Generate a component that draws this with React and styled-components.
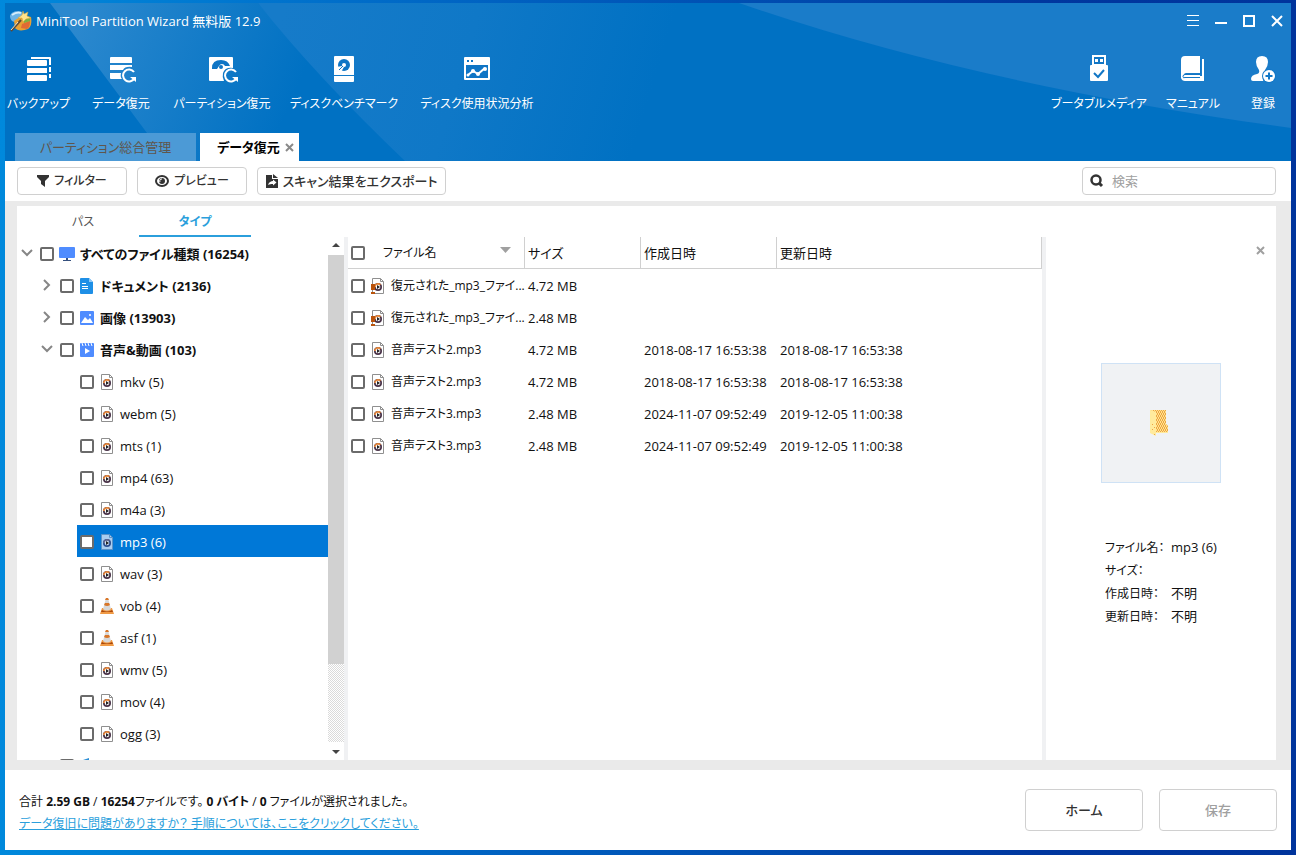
import { useState } from "react";
import styled, { createGlobalStyle } from "styled-components";

const tools = [
    { name: "バックアップ", icon: "backup", width: 57 },
    { name: "データ復元", icon: "recovery", width: 58 },
    { name: "パーティション復元", icon: "partition", width: 94 },
    { name: "ディスクベンチマーク", icon: "benchmark", width: 100 },
    { name: "ディスク使用状況分析", icon: "usage", width: 116 },
];

const sideTools = [
    { name: "ブータブルメディア", icon: "usb", width: 88 },
    { name: "マニュアル", icon: "manual", width: 50 },
    { name: "登録", icon: "register", width: 40 },
];

const tree = [
    { name: "すべてのファイル種類 (16254)", level: 0, icon: "monitor", open: true },
    { name: "ドキュメント (2136)", level: 1, icon: "document", open: false },
    { name: "画像 (13903)", level: 1, icon: "image", open: false },
    { name: "音声&動画 (103)", level: 1, icon: "video", open: true },
    { name: "mkv (5)", level: 2, icon: "media" },
    { name: "webm (5)", level: 2, icon: "media" },
    { name: "mts (1)", level: 2, icon: "media" },
    { name: "mp4 (63)", level: 2, icon: "media" },
    { name: "m4a (3)", level: 2, icon: "media" },
    { name: "mp3 (6)", level: 2, icon: "media" },
    { name: "wav (3)", level: 2, icon: "media" },
    { name: "vob (4)", level: 2, icon: "cone" },
    { name: "asf (1)", level: 2, icon: "cone" },
    { name: "wmv (5)", level: 2, icon: "media" },
    { name: "mov (4)", level: 2, icon: "media" },
    { name: "ogg (3)", level: 2, icon: "media" },
    { name: "", level: 1, icon: "clapper" },
];

const files = [
    { id: 1, name: "復元された_mp3_ファイ...", size: "4.72 MB", created: "", updated: "", icon: "mediaLost" },
    { id: 2, name: "復元された_mp3_ファイ...", size: "2.48 MB", created: "", updated: "", icon: "mediaLost" },
    { id: 3, name: "音声テスト2.mp3", size: "4.72 MB", created: "2018-08-17 16:53:38", updated: "2018-08-17 16:53:38", icon: "media" },
    { id: 4, name: "音声テスト2.mp3", size: "4.72 MB", created: "2018-08-17 16:53:38", updated: "2018-08-17 16:53:38", icon: "media" },
    { id: 5, name: "音声テスト3.mp3", size: "2.48 MB", created: "2024-11-07 09:52:49", updated: "2019-12-05 11:00:38", icon: "media" },
    { id: 6, name: "音声テスト3.mp3", size: "2.48 MB", created: "2024-11-07 09:52:49", updated: "2019-12-05 11:00:38", icon: "media" },
];

export default function App() {

    const [selected, setSelected] = useState("mp3 (6)");
    const [search, setSearch] = useState("");

    return (
        <>
            <GlobalStyle />
            <Window>
                <Header>
                    <Facets />
                    <TitleBar>
                        <Logo />
                        <h1>MiniTool Partition Wizard 無料版 12.9</h1>
                        <WindowButtons>
                            <button aria-label="メニュー"><svg width="14" height="14"><path d="M1 1.5h12M1 6.5h12M1 11.5h12" stroke="#fff" /></svg></button>
                            <button aria-label="最小化"><svg width="14" height="14"><path d="M1 9h12" stroke="#fff" strokeWidth="2" /></svg></button>
                            <button aria-label="最大化"><svg width="14" height="14"><path d="M2 2h10v10H2z" fill="none" stroke="#fff" strokeWidth="2" /></svg></button>
                            <button aria-label="閉じる"><svg width="14" height="14"><path d="M2 2l10 10M12 2L2 12" stroke="#fff" strokeWidth="2" /></svg></button>
                        </WindowButtons>
                    </TitleBar>
                    <ToolBar>
                        <ToolGroup>
                            {tools.map((tool) => <Tool key={tool.name} $width={tool.width}><Icon name={tool.icon} /><span>{tool.name}</span></Tool>)}
                        </ToolGroup>
                        <ToolGroup>
                            {sideTools.map((tool) => <Tool key={tool.name} $width={tool.width}><Icon name={tool.icon} /><span>{tool.name}</span></Tool>)}
                        </ToolGroup>
                    </ToolBar>
                    <Tabs>
                        <Tab $width="181px">パーティション総合管理</Tab>
                        <Tab $width="99px" $active>データ復元 <Cross color="#8a8a8a" /></Tab>
                    </Tabs>
                </Header>

                <Actions>
                    <Action $width="110px" $size="12px">
                        <svg width="12" height="12"><path d="M0 0h12v2L8 6v6L4 9V6L0 2z" fill="#333" /></svg>
                        フィルター
                    </Action>
                    <Action $width="110px" $size="12px">
                        <svg width="14" height="12" viewBox="0 0 14 12">
                            <ellipse cx="7" cy="6" rx="6" ry="5" fill="none" stroke="#333" strokeWidth="2" />
                            <circle cx="7" cy="6" r="3" fill="#333" />
                            <path d="M7 4a2 2 0 0 0-2 3" fill="none" stroke="#fff" />
                        </svg>
                        プレビュー
                    </Action>
                    <Action $width="189px" $size="13px">
                        <svg width="12" height="14" viewBox="0 0 12 14">
                            <path d="M0 1h6v4h6v9H0z" fill="#333" />
                            <path d="M7 0l5 4H7z" fill="#333" />
                            <path d="M2 11c1-3 3-4 5-4V5.500L10.500 8.500 7 11.500V10c-2 0-3.500 0-5 1z" fill="#fff" />
                        </svg>
                        スキャン結果をエクスポート
                    </Action>
                    <Search>
                        <svg width="14" height="14"><circle cx="6" cy="6" r="4.500" fill="none" stroke="#333" strokeWidth="2.500" /><path d="M9 9l3 3" stroke="#333" strokeWidth="3" /></svg>
                        <input aria-label="検索" placeholder="検索" value={search} onChange={(e) => setSearch(e.target.value)} />
                    </Search>
                </Actions>

                <Content>
                    <Panel>
                        <Sidebar>
                            <Views>
                                <View>パス</View>
                                <View $active>タイプ</View>
                            </Views>
                            <TreeArea>
                                <Tree>
                                    {tree.map((item) => (
                                        <Node key={item.name} $level={item.level}>
                                            <Toggle>{item.open !== undefined && <Chevron open={item.open} />}</Toggle>
                                            <NodeLabel $bold={item.level < 2} $selected={item.name === selected} onClick={() => setSelected(item.name)}>
                                                <Check type="checkbox" aria-label={item.name} />
                                                <IconBox><Icon name={item.icon} tint={item.name === selected} /></IconBox>
                                                <span>{item.name}</span>
                                            </NodeLabel>
                                        </Node>
                                    ))}
                                </Tree>
                                <Scrollbar>
                                    <svg width="16" height="18"><path d="M4 10l4-4 4 4z" fill="#444" /></svg>
                                    <Track><Thumb /></Track>
                                    <svg width="16" height="18"><path d="M4 8l4 4 4-4z" fill="#444" /></svg>
                                </Scrollbar>
                            </TreeArea>
                        </Sidebar>
                        <Splitter />
                        <TableArea>
                            <Table>
                                <colgroup><NameCol /><SizeCol /><DateCol /><col /></colgroup>
                                <thead>
                                    <tr>
                                        <th>
                                            <HeadName>
                                                <Check type="checkbox" aria-label="すべて選択" />
                                                <span>ファイル名</span>
                                                <svg width="11" height="12"><path d="M0 0h11L5.500 6z" fill="#a0a0a0" /></svg>
                                            </HeadName>
                                        </th>
                                        <th>サイズ</th>
                                        <th>作成日時</th>
                                        <th>更新日時</th>
                                    </tr>
                                </thead>
                                <tbody>
                                    {files.map((file) => (
                                        <tr key={file.id}>
                                            <td>
                                                <FileName>
                                                    <Check type="checkbox" />
                                                    <IconBox><Icon name={file.icon} /></IconBox>
                                                    <span>{file.name}</span>
                                                </FileName>
                                            </td>
                                            <td>{file.size}</td>
                                            <td>{file.created}</td>
                                            <td>{file.updated}</td>
                                        </tr>
                                    ))}
                                </tbody>
                            </Table>
                        </TableArea>
                        <Splitter />
                        <Preview>
                            <CloseRow><button aria-label="閉じる"><Cross color="#a0a0a0" /></button></CloseRow>
                            <Thumbnail><Folder /></Thumbnail>
                            <Info>
                                <dt>ファイル名：</dt><dd>mp3 (6)</dd>
                                <dt>サイズ：</dt><dd></dd>
                                <dt>作成日時：</dt><dd>不明</dd>
                                <dt>更新日時：</dt><dd>不明</dd>
                            </Info>
                        </Preview>
                    </Panel>
                </Content>

                <Footer>
                    <Summary>
                        <p>合計 <b>2.59 GB</b> / <b>16254</b>ファイルです。 <b>0 バイト</b> / <b>0</b> ファイルが選択されました。</p>
                        <a href="#help">データ復旧に問題がありますか？ 手順については、ここをクリックしてください。</a>
                    </Summary>
                    <FooterButton>ホーム</FooterButton>
                    <FooterButton disabled>保存</FooterButton>
                </Footer>
            </Window>
        </>
    )
}

function Facets() {
    return (
        <Backdrop viewBox="0 0 1286 158" preserveAspectRatio="none" aria-hidden="true">
            <defs>
                <linearGradient id="left" gradientUnits="userSpaceOnUse" x1="80" y1="0" x2="290" y2="90">
                    <stop offset="0" stopColor="#2b88ce" />
                    <stop offset="1" stopColor="#0071c3" />
                </linearGradient>
                <linearGradient id="middle" gradientUnits="userSpaceOnUse" x1="280" y1="0" x2="640" y2="110">
                    <stop offset="0" stopColor="#167bc9" />
                    <stop offset="0.5" stopColor="#0f78c7" />
                    <stop offset="1" stopColor="#0071c3" />
                </linearGradient>
            </defs>
            <path d="M45 0Q90 60 142 130L162 158H396L253 0z" fill="url(#left)" />
            <path d="M253 0Q310 72 400 158H680V0z" fill="url(#middle)" />
            <path d="M734 0Q970 82 1286 125V0z" fill="#1a7cc9" />
        </Backdrop>
    )
}

function Logo() {
    return (
        <svg width="22" height="22" viewBox="0 0 22 22" aria-hidden="true">
            <path d="M0 6c1-4 6-6 12-4l1 6-8 4c-3 0-5-3-5-6z" fill="#6db4e6" />
            <path d="M2 5c3-2 6-3 9-2" stroke="#d5edfb" strokeWidth="2" fill="none" />
            <path d="M4 11c4-4 12-6 17-4 1 5 0 10-3 12-5 2-11 2-13-1z" fill="#e8a234" />
            <path d="M12 14l8-3c0 4-1 7-3 8l-6-1z" fill="#e06a34" />
            <path d="M14 9l6-2v4l-6 2z" fill="#7fae42" />
            <path d="M13 1l1 3 4-2-1 4 4 2-5 1-3 3-1-4-4 0 4-3z" fill="#ffe38a" stroke="#c9a03c" strokeWidth=".5" />
            <path d="M1 21L11 10" stroke="#5d4a37" strokeWidth="2" />
            <path d="M1 20L8 12" stroke="#f2e6c8" />
        </svg>
    )
}

function Cross({ color }) {
    return <svg width="9" height="9" aria-hidden="true"><path d="M1 1l7 7M8 1L1 8" stroke={color} strokeWidth="2" /></svg>
}

function Chevron({ open }) {
    return (
        <svg width="12" height="12" aria-hidden="true">
            <path d={open ? "M1 3l5 5 5-5" : "M3 1l5 5-5 5"} fill="none" stroke="#868686" strokeWidth="2" />
        </svg>
    )
}

function Folder() {
    return (
        <svg width="24" height="28" viewBox="0 0 24 28" aria-hidden="true">
            <defs>
                <pattern id="grain" width="2" height="4" patternUnits="userSpaceOnUse">
                    <rect width="2" height="4" fill="#ffe48f" />
                    <path d="M0 0h1v2h1v2H1V2H0z" fill="#eda544" />
                </pattern>
            </defs>
            <path d="M1 1h16v14l2 2v7H7v3L1 24z" fill="#ffeb9d" />
            <path d="M2 1h15v14l2 2v6H7V3z" fill="url(#grain)" />
            <path d="M3 15h1v1H3zM3 20h1v1H3zM5 18h1v1H5zM5 25h1v1H5z" fill="#eda544" />
        </svg>
    )
}

function MediaFile({ tint, lost }) {
    return (
        <svg width="14" height="16" viewBox="0 0 14 16" aria-hidden="true">
            <path d="M1.500 .5h8l3 3v12h-11z" fill={tint ? "#a9cdf0" : "#fff"} stroke={tint ? "#5b93c8" : "#8f8f8f"} />
            <path d="M9.500 .5v3h3" fill="none" stroke={tint ? "#5b93c8" : "#8f8f8f"} />
            <circle cx="7" cy="9" r="4" fill={tint ? "#2d4f8f" : "#4a3348"} />
            <path d="M3 9a4 4 0 0 1 7-2.700L7 9z" fill={tint ? "#60668e" : "#e5863a"} />
            <circle cx="7" cy="9" r="2.300" fill={tint ? "#cfe0f2" : "#fff"} />
            <path d="M6 7l3 2-3 2z" fill="#222" />
            {lost && <path d="M0 6h4v6H0zM0 14h4v2H0z" fill="#b9530c" />}
        </svg>
    )
}

function Icon({ name, tint }) {
    switch (name) {
        case "backup":
            return (
                <svg width="28" height="28" viewBox="0 0 28 28" fill="#fff">
                    <rect x="2" y="5" width="20" height="6" rx="1" />
                    <rect x="2" y="13" width="20" height="5" />
                    <rect x="2" y="20" width="20" height="6" rx="1" />
                    <path d="M6 2h19q1 0 1 1v7h-2V4H6zM24 12h2v5h-2zM24 19h2v4h-2z" />
                </svg>
            )
        case "recovery":
            return (
                <svg width="32" height="28" viewBox="-4 0 32 28" fill="#fff">
                    <path d="M2 2h20q1 0 1 1v5H1V3q0-1 1-1zM1 10h22v2q-7-1-9 3H1zM1 18h11q-1 4 1 6H2q-1 0-1-1z" />
                    <path d="M25 17a6 6 0 1 0 .5 6" fill="none" stroke="#fff" strokeWidth="2" />
                    <path d="M21 22h6v5z" />
                </svg>
            )
        case "partition":
            return (
                <svg width="32" height="28" viewBox="-2 0 32 28" fill="#fff">
                    <path d="M2 2h22q1 0 1 1v10q-8-1-10 5-1 4 1 8H2q-1 0-1-1V3q0-1 1-1z" />
                    <path d="M4 13Q4 5 13 5q7 0 9 6h-5q-1-2-3-2-2 0-3 2l-2 3H4z" fill="#0f75c5" />
                    <circle cx="13" cy="12" r="2" fill="#0f75c5" />
                    <path d="M28 17a6 6 0 1 0 .5 6" fill="none" stroke="#fff" strokeWidth="2" />
                    <path d="M24 22h6v5z" />
                </svg>
            )
        case "benchmark":
            return (
                <svg width="28" height="28" viewBox="0 0 28 28" fill="#fff">
                    <path d="M5 1h18q1 0 1 1v18H4V2q0-1 1-1zM4 21h20v5q0 1-1 1H5q-1 0-1-1z" />
                    <circle cx="14" cy="10" r="6" fill="#0f75c5" />
                    <circle cx="14" cy="10" r="2" />
                    <path d="M7 12l5-1 2 1-3 5-4-1z" />
                    <path d="M9 15l4-4" stroke="#0f75c5" />
                </svg>
            )
        case "usage":
            return (
                <svg width="28" height="28" viewBox="0 0 28 28">
                    <path d="M2 2h24q1 0 1 1v21q0 1-1 1H2q-1 0-1-1V3q0-1 1-1z" fill="#fff" />
                    <path d="M3 10h22v13H3zM4 5h2v2H4zM8 5h2v2H8z" fill="#0f75c5" />
                    <path d="M5 20l5-4 5 3 7-6" fill="none" stroke="#fff" strokeWidth="2" />
                    <g fill="#fff"><circle cx="5" cy="20" r="1.500" /><circle cx="10" cy="16" r="2" /><circle cx="15" cy="19" r="2" /><circle cx="22" cy="14" r="2" /></g>
                </svg>
            )
        case "usb":
            return (
                <svg width="28" height="28" viewBox="0 0 28 28">
                    <path d="M7 0h14v10h1q1 0 1 1v14q0 1-1 1H6q-1 0-1-1V11q0-1 1-1h1z" fill="#fff" />
                    <path d="M9 2h10v7H9z" fill="#1176c5" />
                    <path d="M10 4h3v3h-3zM15 4h3v3h-3z" fill="#fff" />
                    <path d="M9 18l4 4 6-7" fill="none" stroke="#1176c5" strokeWidth="2" />
                </svg>
            )
        case "manual":
            return (
                <svg width="28" height="28" viewBox="0 0 28 28">
                    <path d="M6 1h15v17H7q-2 0-2 2t2 1h16V4h2v22H6q-3 0-4-3V5q0-4 4-4z" fill="#fff" />
                    <path d="M5 20h16v2H5z" fill="#fff" />
                    <path d="M21 19.500H6q-2 0-2 2t2 1h15" fill="none" stroke="#1176c5" />
                    <path d="M21.500 4v15" stroke="#1176c5" />
                </svg>
            )
        case "register":
            return (
                <svg width="28" height="28" viewBox="0 0 28 28">
                    <path d="M13 1q6 0 6 6 0 4-3 8-1 2 1 4l-3 7H4q-2 0-2-2 0-4 6-5 3-1 2-4-3-4-3-8 0-6 6-6z" fill="#fff" />
                    <circle cx="20" cy="21" r="7" fill="#1278c7" />
                    <circle cx="20" cy="21" r="6" fill="#fff" />
                    <path d="M20 17.500v7M16.500 21h7" stroke="#1278c7" strokeWidth="2" />
                </svg>
            )
        case "monitor":
            return <svg width="16" height="14"><path d="M1 0h14q1 0 1 1v9q0 1-1 1H1q-1 0-1-1V1q0-1 1-1z" fill="#4f8cff" /><path d="M7 11h2v2h3v1H4v-1h3z" fill="#35507e" /></svg>
        case "document":
            return (
                <svg width="14" height="16" viewBox="0 0 14 16">
                    <path d="M1 0h8l4 4v11q0 1-1 1H1q-1 0-1-1V1q0-1 1-1z" fill="#1e8fe6" />
                    <path d="M9 0l4 4H9z" fill="#8cc8f7" />
                    <path d="M2 5.500h4M2 8.500h6M2 10.500h6" stroke="#fff" />
                </svg>
            )
        case "image":
            return (
                <svg width="14" height="14">
                    <rect width="14" height="14" rx="1" fill="#4f8cff" />
                    <path d="M1 12l4-6 3 3 2-2 3 5z" fill="#fff" />
                    <circle cx="10" cy="4" r="1" fill="#fff" />
                </svg>
            )
        case "video":
            return (
                <svg width="14" height="14">
                    <rect width="14" height="14" rx="1" fill="#4f8cff" />
                    <path d="M2 0l1 3M5 0l1 3M8 0l1 3M11 0l1 3" stroke="#fff" />
                    <path d="M5 5l5 3-5 3z" fill="#fff" />
                </svg>
            )
        case "cone":
            return (
                <svg width="14" height="16" viewBox="0 0 14 16">
                    <path d="M2 10h10l2 6H0z" fill="#f09a45" />
                    <path d="M2 12q5 3 10 0l1 2H1z" fill="#a9480c" />
                    <path d="M6 0h2l3 11q-4 3-8 0z" fill="#d8d8d8" />
                    <path d="M6 0h2l1 2H5zM5 5h4l1 2q-3 2-6 0z" fill="#d9772a" />
                </svg>
            )
        case "clapper":
            return <svg width="14" height="16"><path d="M0 3l9-3v2l5 1v13H0z" fill="#2d8fd6" /></svg>
        case "mediaLost":
            return <MediaFile lost />
        default:
            return <MediaFile tint={tint} />
    }
}

const GlobalStyle = createGlobalStyle`
    * {
        box-sizing: border-box;
    }
    body {
        margin: 0;
        background: linear-gradient(90deg, #0089dc 0%, #0060c0 40%, #00379f 80%, #00349c 100%);
        color: #111111;
        font-family: "Open Sans", "Noto Sans CJK JP", sans-serif;
        font-size: 13px;
        line-height: 20px;
        font-feature-settings: "palt";
    }
    button, input {
        font: inherit;
        font-feature-settings: inherit;
        margin: 0;
    }
    button {
        padding: 0;
        border: none;
        background: none;
        color: inherit;
        white-space: nowrap;
        cursor: pointer;
    }
    svg {
        display: block;
        flex-shrink: 0;
    }
`

const Window = styled.div`
    height: 100vh;
    padding: 3px 5px 5px;
    display: flex;
    flex-direction: column;
`

const Header = styled.header`
    position: relative;
    isolation: isolate;
    background: #0071c3;
    color: #ffffff;
`

const Backdrop = styled.svg`
    position: absolute;
    inset: 0;
    width: 100%;
    height: 100%;
    z-index: -1;
`

const TitleBar = styled.div`
    height: 36px;
    padding: 0 7px 0 5px;
    display: flex;
    align-items: center;
    gap: 4px;
    h1 {
        flex: 1;
        margin: 0;
        font-size: 13px;
        font-weight: 400;
    }
`

const WindowButtons = styled.div`
    display: flex;
    gap: 14px;
`

const ToolBar = styled.div`
    height: 94px;
    padding: 16px 8px 0 5px;
    display: flex;
    justify-content: space-between;
`

const ToolGroup = styled.div`
    display: flex;
    align-items: flex-start;
    gap: 25px;
`

const Tool = styled.button`
    width: ${props => props.$width}px;
    display: flex;
    flex-direction: column;
    align-items: center;
    gap: 11px;
    font-size: 12px;
`

const Tabs = styled.div`
    display: flex;
    gap: 4px;
    padding-left: 10px;
`

const Tab = styled.button`
    width: ${props => props.$width};
    height: 28px;
    display: flex;
    align-items: center;
    justify-content: center;
    gap: 5px;
    padding-left: ${props => props.$active ? "12px" : "0"};
    background: ${props => props.$active ? "#ffffff" : "#4c9ad6"};
    color: ${props => props.$active ? "#000000" : "#5f564d"};
    font-weight: ${props => props.$active ? 700 : 400};
`

const Actions = styled.div`
    height: 40px;
    padding: 0 15px 0 12px;
    display: flex;
    align-items: center;
    gap: 10px;
    background: #ffffff;
`

const Action = styled.button`
    width: ${props => props.$width};
    height: 28px;
    display: flex;
    align-items: center;
    justify-content: center;
    gap: 5px;
    border: 1px solid #d0d0d0;
    border-radius: 4px;
    color: #333333;
    font-size: ${props => props.$size};
    font-weight: 500;
`

const Search = styled.label`
    width: 194px;
    height: 28px;
    margin-left: auto;
    padding: 0 7px;
    display: flex;
    align-items: center;
    gap: 8px;
    border: 1px solid #d0d0d0;
    border-radius: 4px;
    input {
        flex: 1;
        min-width: 0;
        padding: 0;
        border: none;
        outline: none;
        background: none;
    }
    input::placeholder {
        color: #a0a0a0;
    }
`

const Content = styled.main`
    flex: 1;
    min-height: 0;
    padding: 5px 15px 10px 12px;
    background: #eaeaea;
    display: flex;
`

const Panel = styled.div`
    flex: 1;
    min-width: 0;
    display: flex;
    background: #ffffff;
`

const Sidebar = styled.aside`
    width: 327px;
    flex-shrink: 0;
    display: flex;
    flex-direction: column;
`

const Views = styled.div`
    display: flex;
    padding-left: 10px;
`

const View = styled.button`
    width: 112px;
    height: 31px;
    padding-top: 2px;
    border-bottom: 2px solid ${props => props.$active ? "#2b9fdc" : "transparent"};
    color: ${props => props.$active ? "#2b9fdc" : "#555555"};
    font-size: 12px;
    font-weight: ${props => props.$active ? 700 : 400};
`

const TreeArea = styled.div`
    flex: 1;
    min-height: 0;
    display: flex;
`

const Tree = styled.ul`
    flex: 1;
    margin: 0;
    padding: 0;
    overflow: hidden;
    list-style: none;
`

const Node = styled.li`
    height: 32px;
    display: flex;
    padding-left: ${props => props.$level * 20}px;
`

const Toggle = styled.span`
    width: 20px;
    display: flex;
    align-items: center;
    justify-content: center;
`

const NodeLabel = styled.div`
    flex: 1;
    display: flex;
    align-items: center;
    gap: 5px;
    padding: 2px 0 0 3px;
    background: ${props => props.$selected ? "#0078d7" : "transparent"};
    color: ${props => props.$selected ? "#ffffff" : "#111111"};
    font-weight: ${props => props.$bold ? 700 : 400};
    white-space: nowrap;
`

const Check = styled.input`
    appearance: none;
    flex-shrink: 0;
    width: 14px;
    height: 14px;
    border: 2px solid #6b6b6b;
    border-radius: 2px;
    background: #ffffff;
    &:checked {
        background: #0078d7;
    }
`

const IconBox = styled.span`
    width: 16px;
    flex-shrink: 0;
    display: flex;
    justify-content: center;
`

const Scrollbar = styled.div`
    width: 16px;
    display: flex;
    flex-direction: column;
`

const Track = styled.div`
    flex: 1;
    background: repeating-conic-gradient(#dadada 0% 25%, #ffffff 0% 50%) 0 0 / 2px 2px;
`

const Thumb = styled.div`
    height: 84%;
    background: #d1d1d1;
`

const Splitter = styled.div`
    width: 4px;
    flex-shrink: 0;
    margin-top: 31px;
    background: #f0f1f3;
`

const TableArea = styled.section`
    flex: 1;
    min-width: 0;
    padding-top: 31px;
`

const Table = styled.table`
    width: 100%;
    table-layout: fixed;
    border-collapse: separate;
    border-spacing: 0;
    text-align: left;
    white-space: nowrap;
    th {
        height: 32px;
        padding: 0 0 0 3px;
        border-right: 1px solid #d0d0d0;
        border-bottom: 1px solid #d0d0d0;
        font-weight: 400;
    }
    td {
        height: 32px;
        padding: 2px 0 0 3px;
    }
`

const NameCol = styled.col`
    width: 177px;
`

const SizeCol = styled.col`
    width: 116px;
`

const DateCol = styled.col`
    width: 136px;
`

const HeadName = styled.div`
    display: flex;
    align-items: center;
    gap: 18px;
    padding-right: 13px;
    font-size: 12px;
    span {
        flex: 1;
    }
`

const FileName = styled.label`
    display: flex;
    align-items: center;
    gap: 5px;
    font-size: 12px;
`

const Preview = styled.section`
    width: 230px;
    flex-shrink: 0;
    display: flex;
    flex-direction: column;
    align-items: center;
`

const CloseRow = styled.div`
    width: 100%;
    height: 157px;
    padding: 40px 11px 0 0;
    display: flex;
    align-items: flex-start;
    justify-content: flex-end;
`

const Thumbnail = styled.div`
    width: 120px;
    height: 120px;
    display: flex;
    align-items: center;
    justify-content: center;
    border: 1px solid #cfe2f5;
    background: #f0f2f4;
`

const Info = styled.dl`
    width: 112px;
    margin: 53px 0 0;
    display: grid;
    grid-template-columns: 66px 1fr;
    line-height: 23px;
    white-space: nowrap;
    dt {
        font-size: 12px;
    }
    dd {
        margin: 0;
    }
`

const Footer = styled.footer`
    height: 80px;
    padding: 0 14px;
    display: flex;
    align-items: center;
    gap: 16px;
    background: #ffffff;
`

const Summary = styled.div`
    flex: 1;
    padding-top: 6px;
    font-size: 12px;
    line-height: 22px;
    p {
        margin: 0;
    }
    a {
        color: #2b9fdc;
    }
`

const FooterButton = styled.button`
    width: 118px;
    height: 42px;
    border: 1px solid #d0d0d0;
    border-radius: 4px;
    color: #333333;
    font-weight: 500;
    &:disabled {
        color: #a0a0a0;
        cursor: default;
    }
`
